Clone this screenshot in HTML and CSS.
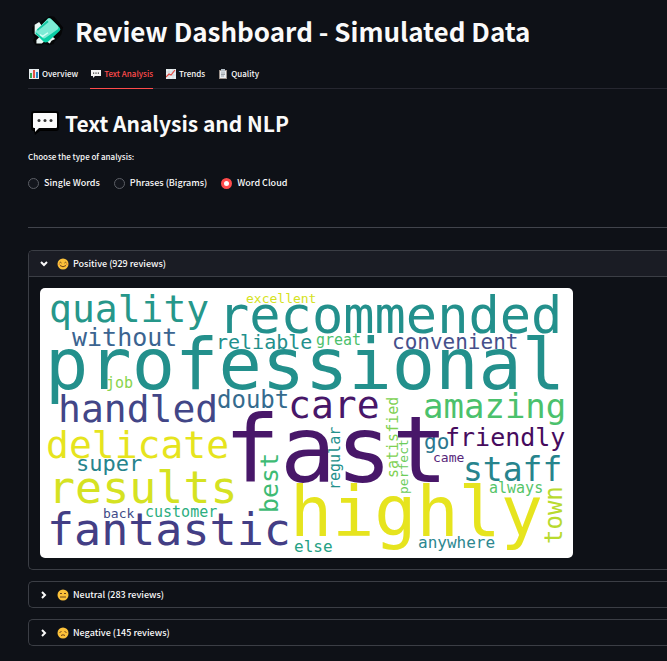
FILE: index.html
```html
<!DOCTYPE html>
<html lang="en">
<head>
<meta charset="utf-8">
<meta name="viewport" content="width=device-width, initial-scale=1">
<title>Review Dashboard</title>
<link rel="stylesheet" href="styles.css">
</head>
<body>
<main class="page">
  <h1 class="title">
    <svg class="title-icon" viewBox="0 0 36 36" aria-hidden="true">
      <path d="M5 10 11 7 16 4 20 1 25 2 30 8 35 14 33 22 30 26 26 29 24 33 18 34 14 32 11 34 4 34 1 29 3 25 0 20 0 14Z" fill="#050607"/>
      <path d="M3 11 8 8 13 15 26 27 22 29 20 32 15 29 11 32 5 32 5 28 8 25 3 21Z" fill="#e9f7f4"/>
      <path d="M4 19 18 4Q20 3 22 5L31 14Q33 16 31 18L18 30Q14 32 12 29L4 21Z" fill="#08cfa5"/>
      <path d="M4 18 18 4Q20 3 22 5L29 12Q31 14 29 16L15 26Q13 27 11 25L4 19Z" fill="#7debd5"/>
      <path d="M6 17 18 7" stroke="#16c5a1" stroke-width="2"/>
      <path d="m9 22 3 2 6-4" stroke="#d7fff5" stroke-width="1.5" fill="none"/>
    </svg>
    <span>Review Dashboard - Simulated Data</span>
  </h1>

  <nav class="tabs" aria-label="Sections">
    <a class="tab" href="#overview">
      <svg class="tab-icon" viewBox="0 0 10 10" aria-hidden="true"><path fill="#e8eef0" d="M0 0h10v10H0z"/><path fill="#35a853" d="M1 4h2v5H1z"/><path fill="#e05246" d="M4 1h2v8H4z"/><path fill="#2484c6" d="M7 3h2v6H7z"/></svg>
      Overview</a>
    <a class="tab tab-active" href="#text" aria-current="page">
      <svg class="tab-icon" viewBox="0 0 10 10" aria-hidden="true"><path fill="#f4f4f4" d="M0 1h10v6H4L2 9V7H0z"/><path fill="#333" d="M2 3.5h1.2v1.2H2zM4.4 3.5h1.2v1.2H4.4zM6.8 3.5H8v1.2H6.8z"/></svg>
      Text Analysis</a>
    <a class="tab" href="#trends">
      <svg class="tab-icon" viewBox="0 0 10 10" aria-hidden="true"><path fill="#e8eef0" d="M0 0h10v10H0z"/><path stroke="#b8c6cc" stroke-width=".5" d="M0 3h10M0 6h10M3 0v10M7 0v10"/><path fill="none" stroke="#e4473e" stroke-width="1.2" d="m0 8 3-3 2 1 4-5"/></svg>
      Trends</a>
    <a class="tab" href="#quality">
      <svg class="tab-icon" viewBox="0 0 10 10" aria-hidden="true"><path fill="#9b918a" d="M1 1h8v9H1z"/><path fill="#eceff1" d="M2 2h6v7H2z"/><path fill="#b4bdc4" d="M3 0h4v2.5H3z"/><path stroke="#78838a" stroke-width=".7" d="M3 4h4M3 5.5h4M3 7h3"/></svg>
      Quality</a>
  </nav>

  <section id="text">
    <h2 class="heading">
      <svg class="heading-icon" viewBox="0 0 28 24" aria-hidden="true"><path fill="#000" d="M3 0h22q3 0 3 3v14q0 3-3 3H9l-5 4-1-4q-3 0-3-3V3q0-3 3-3z"/><path fill="#fafafa" d="M3 2h22q1 0 1 1v13q0 1-1 1H8l-4 4v-4H3q-1 0-1-1V3q0-1 1-1z"/><circle fill="#333" cx="8" cy="9.5" r="1.5"/><circle fill="#333" cx="14" cy="9.5" r="1.5"/><circle fill="#333" cx="20" cy="9.5" r="1.5"/></svg>
      <span>Text Analysis and NLP</span>
    </h2>

    <fieldset class="choices">
      <legend class="legend">Choose the type of analysis:</legend>
      <div class="options">
        <label class="option"><input class="radio" type="radio" name="analysis">Single Words</label>
        <label class="option"><input class="radio" type="radio" name="analysis">Phrases (Bigrams)</label>
        <label class="option"><input class="radio" type="radio" name="analysis" checked>Word Cloud</label>
      </div>
    </fieldset>

    <hr class="rule">

    <details class="panel" open>
      <summary class="panel-head">
        <svg class="chevron chevron-down" viewBox="0 0 8 8" aria-hidden="true"><path d="m2 1 3 3-3 3"/></svg>
        <svg class="face" viewBox="0 0 12 12" aria-hidden="true"><circle cx="6" cy="6" r="5.5" fill="#fbc13a"/><path d="M2.5 5q1-1.5 2 0M7.5 5q1-1.5 2 0M3 7.5q3 2.6 6 0" fill="none" stroke="#6b421b"/><path d="M1.5 6.5h1.6M9 6.5h1.6" stroke="#f08a45"/></svg>
        Positive (929 reviews)
      </summary>
      <div class="panel-body">
        <svg class="cloud" viewBox="0 0 533 270" role="img" aria-label="Word cloud of positive reviews">
          <g fill="#23908c">
            <text x="9" y="34" font-size="38" fill="#26978a">quality</text>
            <text x="178" y="45" font-size="52">recommended</text>
            <text x="5" y="101" font-size="72">professional</text>
            <text x="176" y="61" font-size="20">reliable</text>
            <text x="423" y="193" font-size="33" fill="#27848d">staff</text>
            <text x="36" y="183" font-size="22" fill="#27848d">super</text>
            <text x="378" y="260" font-size="16" fill="#2c8790">anywhere</text>
            <text x="384" y="161" font-size="21" fill="#2b778e">go</text>
            <text transform="translate(300 202) rotate(-90)" font-size="15">regular</text>
          </g>
          <g fill="#433e85">
            <text x="18" y="134" font-size="38" fill="#424687">handled</text>
            <text x="7" y="257" font-size="45">fantastic</text>
            <text x="352" y="61" font-size="21" fill="#46508b">convenient</text>
            <text x="32" y="58" font-size="25" fill="#3b6490">without</text>
            <text x="177" y="120" font-size="24" fill="#356b8e">doubt</text>
            <text x="63" y="230" font-size="13" fill="#404b88">back</text>
          </g>
          <g fill="#481769">
            <text x="184" y="194" font-size="93">fast</text>
            <text x="248" y="130" font-size="38">care</text>
            <text x="405" y="158" font-size="25" fill="#460b5d">friendly</text>
            <text x="393" y="174" font-size="13" fill="#57267a">came</text>
          </g>
          <g fill="#e6e41e">
            <text x="250" y="248" font-size="70">highly</text>
            <text x="6" y="170" font-size="38">delicate</text>
            <text x="8" y="215" font-size="45" fill="#d5e222">results</text>
            <text x="206" y="15" font-size="13" fill="#d5e222">excellent</text>
            <text transform="translate(522 256) rotate(-90)" font-size="24" fill="#b8da2e">town</text>
          </g>
          <g fill="#4bc16c">
            <text x="383" y="130" font-size="34">amazing</text>
            <text x="276" y="57" font-size="15">great</text>
            <text x="66" y="100" font-size="15" fill="#88d44d">job</text>
            <text x="449" y="205" font-size="15" fill="#56c568">always</text>
            <text x="105" y="229" font-size="15" fill="#2cae80">customer</text>
            <text x="254" y="264" font-size="16" fill="#25a184">else</text>
            <text transform="translate(238 225) rotate(-90)" font-size="25" fill="#3ebb74">best</text>
            <text transform="translate(358 190) rotate(-90)" font-size="15" fill="#80d153">satisfied</text>
            <text transform="translate(368 206) rotate(-90)" font-size="13" fill="#6ccc5b">perfect</text>
          </g>
        </svg>
      </div>
    </details>

    <details class="panel">
      <summary class="panel-head">
        <svg class="chevron" viewBox="0 0 8 8" aria-hidden="true"><path d="m2 1 3 3-3 3"/></svg>
        <svg class="face" viewBox="0 0 12 12" aria-hidden="true"><circle cx="6" cy="6" r="5.5" fill="#fbc13a"/><path d="M3 4.5h2M7 4.5h2M3 8h6" stroke="#6b421b"/></svg>
        Neutral (283 reviews)
      </summary>
    </details>

    <details class="panel">
      <summary class="panel-head">
        <svg class="chevron" viewBox="0 0 8 8" aria-hidden="true"><path d="m2 1 3 3-3 3"/></svg>
        <svg class="face" viewBox="0 0 12 12" aria-hidden="true"><circle cx="6" cy="6" r="5.5" fill="#fbc13a"/><path d="m2.5 5.5 2-1M9.5 5.5l-2-1M4 8.5q2-1.500 4 0" fill="none" stroke="#6b421b"/></svg>
        Negative (145 reviews)
      </summary>
    </details>
  </section>
</main>
</body>
</html>
```
FILE: styles.css
```css
* { box-sizing: border-box; }

body {
  margin: 0;
  background: #0e1117;
  color: #fafafa;
  font-family: "Noto Sans CJK JP", "Noto Sans", sans-serif;
  font-size: 9px;
  font-weight: 500;
  line-height: 16px;
}

.page { padding: 11px 0 12px 28px; }

.title, .heading {
  display: flex;
  align-items: center;
  margin: 0;
  white-space: nowrap;
}

.title { gap: 11px; padding-left: 4px; font-size: 26px; font-weight: 700; line-height: 40px; }
.title-icon { width: 32px; height: 32px; }

.tabs {
  display: flex;
  gap: 12px;
  margin-top: 8px;
  border-bottom: 1px solid #262730;
}

.tab {
  display: flex;
  align-items: center;
  gap: 3px;
  height: 30px;
  margin-bottom: -1px;
  padding-left: 1px;
  border-bottom: 1px solid transparent;
  color: inherit;
  font-size: 8px;
  text-decoration: none;
}

.tab-active { border-bottom-color: #ff4b4b; color: #ff4b4b; }
.tab-icon { width: 10px; height: 10px; }

.heading { gap: 6px; margin-top: 18px; padding-left: 3px; font-size: 21px; font-weight: 600; line-height: 32px; }
.heading-icon { width: 28px; height: 24px; }

.choices { margin: 10px 0 0; padding: 0; border: 0; }
.legend { padding: 0; font-size: 8px; }
.options { display: flex; gap: 14px; padding-top: 10px; }
.option { display: flex; align-items: center; gap: 5px; }

.radio {
  appearance: none;
  width: 11px;
  height: 11px;
  margin: 0;
  border: 1px solid #5c5f66;
  border-radius: 50%;
  background: #13161d;
}

.radio:checked { border: 3px solid #ff4b4b; background: #fff; }

.rule { margin: 36px 0 22px; border: 0; border-top: 1px solid #41444c; }

.panel {
  margin-bottom: 11px;
  border: 1px solid #3b3e45;
  border-right: 0;
  border-radius: 5px 0 0 5px;
  overflow: hidden;
}

.panel-head {
  display: flex;
  align-items: center;
  gap: 4px;
  height: 25px;
  padding-left: 11px;
  list-style: none;
  cursor: pointer;
}

.panel[open] .panel-head { height: 26px; background: #1a1c24; border-bottom: 1px solid #3b3e45; }

.chevron { width: 8px; height: 8px; margin-right: 5px; fill: none; stroke: #fafafa; stroke-width: 2; }
.chevron-down { transform: rotate(90deg); }
.face { width: 12px; height: 12px; }

.panel-body { padding: 11px; }

.cloud {
  display: block;
  width: 100%;
  max-width: 533px;
  border-radius: 5px;
  background: #fff;
  font-family: "DejaVu Sans Mono", monospace;
}
```
